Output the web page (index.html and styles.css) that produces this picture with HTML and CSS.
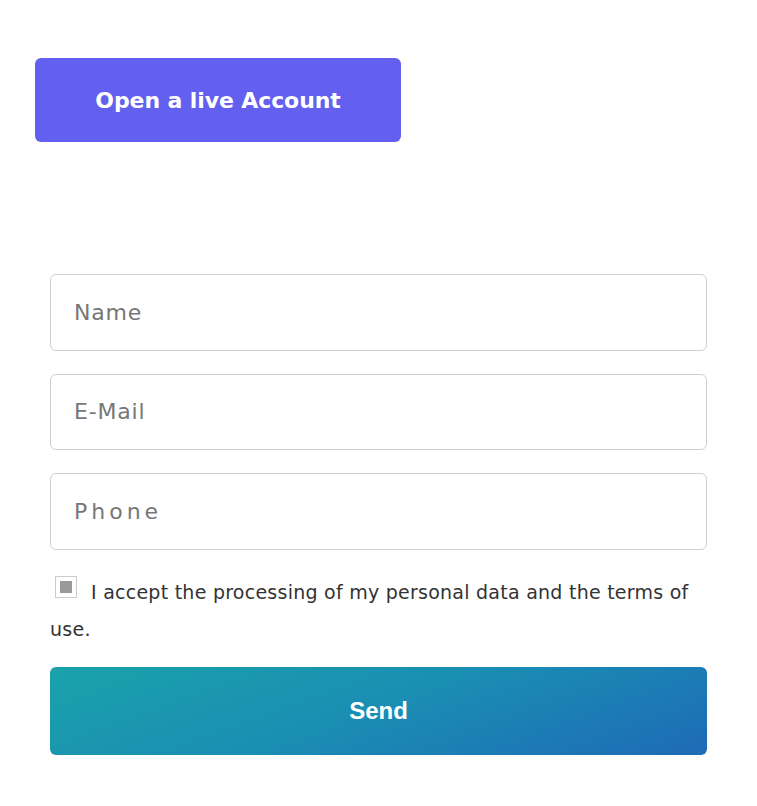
FILE: index.html
```html
<!DOCTYPE html>
<html lang="en">
<head>
<meta charset="utf-8">
<title>Open a live Account</title>
<link rel="stylesheet" href="styles.css">
</head>
<body>
<div class="page">
  <div class="cta-wrap">
    <a class="cta" href="#">Open a live Account</a>
  </div>
  <form class="form">
    <input class="field" type="text" placeholder="Name">
    <input class="field" type="email" placeholder="E-Mail">
    <input class="field field-phone" type="tel" placeholder="Phone">
    <label class="consent">
      <span class="box"><span class="box-mark"></span></span>I accept the processing of my personal data and the terms of use.
    </label>
    <button class="send" type="button">Send</button>
  </form>
</div>
</body>
</html>
```

FILE: styles.css
```css
html, body {
  margin: 0;
  padding: 0;
  background: #ffffff;
}
.page {
  width: 757px;
  font-family: "DejaVu Sans", "Open Sans", sans-serif;
}
.cta-wrap {
  padding: 58px 0 0 35px;
}
.cta {
  display: flex;
  align-items: center;
  justify-content: center;
  width: 366px;
  height: 84px;
  box-sizing: border-box;
  background: #6360ef;
  border-radius: 6px;
  color: #ffffff;
  text-decoration: none;
  font-weight: 700;
  font-size: 22px;
  letter-spacing: -0.1px;
}
.form {
  display: flex;
  flex-direction: column;
  margin: 132px 0 0 50px;
  width: 657px;
}
.field {
  height: 76.5px;
  box-sizing: border-box;
  border: 1px solid #cfcfcf;
  border-radius: 6px;
  padding: 0 23px;
  margin-bottom: 23px;
  font-family: "DejaVu Sans", "Open Sans", sans-serif;
  font-size: 22px;
  letter-spacing: 0.8px;
  color: #333;
  outline: none;
}
.field::placeholder {
  color: #777777;
}
.field-phone::placeholder {
  letter-spacing: 4px;
}
.consent {
  display: block;
  margin-top: 1px;
  font-size: 19px;
  line-height: 37px;
  letter-spacing: 0.25px;
  color: #333333;
}
.box {
  display: inline-flex;
  align-items: center;
  justify-content: center;
  width: 22px;
  height: 22px;
  box-sizing: border-box;
  border: 1px solid #cccccc;
  margin: 0 14px 0 5px;
  vertical-align: 6px;
}
.box-mark {
  width: 12px;
  height: 12px;
  background: #999999;
}
.send {
  margin-top: 19px;
  height: 88px;
  border: none;
  border-radius: 6px;
  background: linear-gradient(160deg, #1aa2ab 0%, #1a8db3 50%, #1e6ab6 100%);
  color: #ffffff;
  font-family: "Liberation Sans", Arial, sans-serif;
  font-weight: 700;
  font-size: 24px;
}
```
